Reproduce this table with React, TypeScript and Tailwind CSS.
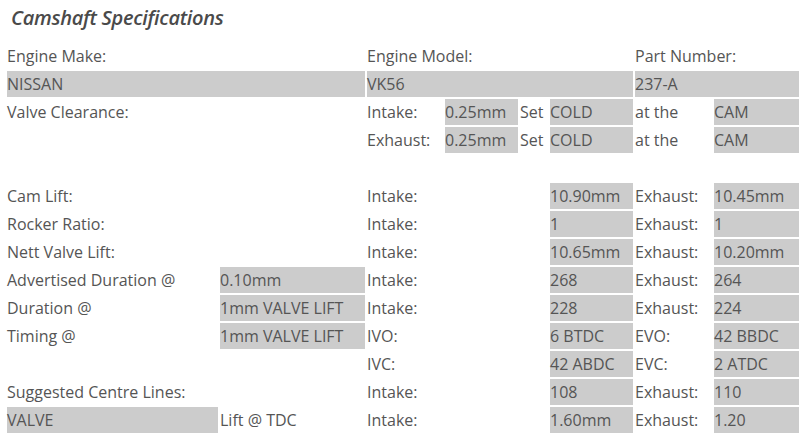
import React from 'react';

type Cell = { text?: string; span?: number; fill?: boolean };

const rows: Cell[][] = [
  [{ text: 'Engine Make:', span: 2 }, { text: 'Engine Model:', span: 4 }, { text: 'Part Number:', span: 2 }],
  [{ text: 'NISSAN', span: 2, fill: true }, { text: 'VK56', span: 4, fill: true }, { text: '237-A', span: 2, fill: true }],
  [
    { text: 'Valve Clearance:', span: 2 },
    { text: 'Intake:' },
    { text: '0.25mm', fill: true },
    { text: 'Set' },
    { text: 'COLD', fill: true },
    { text: 'at the' },
    { text: 'CAM', fill: true },
  ],
  [
    { span: 2 },
    { text: 'Exhaust:' },
    { text: '0.25mm', fill: true },
    { text: 'Set' },
    { text: 'COLD', fill: true },
    { text: 'at the' },
    { text: 'CAM', fill: true },
  ],
  [{ span: 8 }],
  [{ text: 'Cam Lift:', span: 2 }, { text: 'Intake:', span: 3 }, { text: '10.90mm', fill: true }, { text: 'Exhaust:' }, { text: '10.45mm', fill: true }],
  [{ text: 'Rocker Ratio:', span: 2 }, { text: 'Intake:', span: 3 }, { text: '1', fill: true }, { text: 'Exhaust:' }, { text: '1', fill: true }],
  [{ text: 'Nett Valve Lift:', span: 2 }, { text: 'Intake:', span: 3 }, { text: '10.65mm', fill: true }, { text: 'Exhaust:' }, { text: '10.20mm', fill: true }],
  [{ text: 'Advertised Duration @' }, { text: '0.10mm', fill: true }, { text: 'Intake:', span: 3 }, { text: '268', fill: true }, { text: 'Exhaust:' }, { text: '264', fill: true }],
  [{ text: 'Duration @' }, { text: '1mm VALVE LIFT', fill: true }, { text: 'Intake:', span: 3 }, { text: '228', fill: true }, { text: 'Exhaust:' }, { text: '224', fill: true }],
  [{ text: 'Timing @' }, { text: '1mm VALVE LIFT', fill: true }, { text: 'IVO:', span: 3 }, { text: '6 BTDC', fill: true }, { text: 'EVO:' }, { text: '42 BBDC', fill: true }],
  [{ span: 2 }, { text: 'IVC:', span: 3 }, { text: '42 ABDC', fill: true }, { text: 'EVC:' }, { text: '2 ATDC', fill: true }],
  [{ text: 'Suggested Centre Lines:', span: 2 }, { text: 'Intake:', span: 3 }, { text: '108', fill: true }, { text: 'Exhaust:' }, { text: '110', fill: true }],
  [{ text: 'VALVE', fill: true }, { text: 'Lift @ TDC' }, { text: 'Intake:', span: 3 }, { text: '1.60mm', fill: true }, { text: 'Exhaust:' }, { text: '1.20', fill: true }],
];

const spanClass: Record<number, string> = {
  1: 'col-span-1',
  2: 'col-span-2',
  3: 'col-span-3',
  4: 'col-span-4',
  8: 'col-span-8',
};

export default function App() {
  return (
    <div className="bg-white w-[812px] h-[445px] overflow-hidden text-[#555] font-['Open_Sans',sans-serif]">
      {/* heading */}
      <h2 className="h-[43px] pl-[11px] pt-[4px] text-[20px] leading-[28px] italic font-semibold tracking-[-0.3px] text-[#4a4a4a]">
        Camshaft Specifications
      </h2>

      {/* spec sheet */}
      <div className="grid grid-cols-[211px_145px_76px_73px_28px_83px_77px_85px] auto-rows-[26px] gap-[2px] pl-[7px] text-[16px]">
        {rows.map((row, r) =>
          row.map((c, i) => (
            <div
              key={`${r}-${i}`}
              className={`${spanClass[c.span ?? 1]} flex items-center whitespace-nowrap leading-none ${c.fill ? 'bg-[#cccccc]' : ''}`}
            >
              {c.text}
            </div>
          ))
        )}
      </div>
    </div>
  );
}
